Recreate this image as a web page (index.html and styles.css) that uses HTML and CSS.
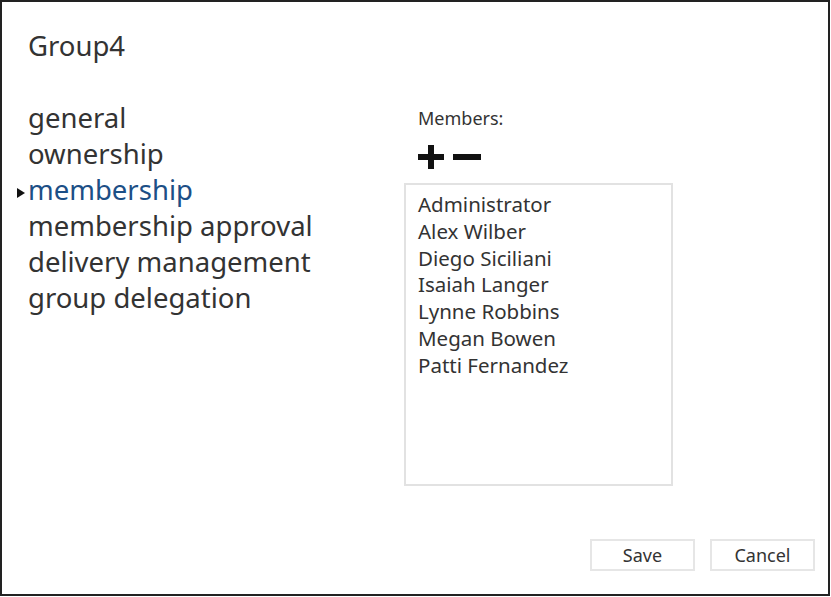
FILE: index.html
```html
<!DOCTYPE html>
<html lang="en">
<head>
    <meta charset="UTF-8">
    <title>Group4</title>
    <link rel="stylesheet" href="styles.css">
</head>
<body>
    <div class="dialog">
        <h1 class="title">Group4</h1>
        <div class="content">
            <nav class="sections">
                <a href="#">general</a>
                <a href="#">ownership</a>
                <a href="#" class="current">membership</a>
                <a href="#">membership approval</a>
                <a href="#">delivery management</a>
                <a href="#">group delegation</a>
            </nav>
            <div class="members">
                <div class="label">Members:</div>
                <div class="tools">
                    <svg width="26" height="24" viewBox="0 0 26 24">
                        <rect x="0" y="9" width="26" height="6" fill="#111"/>
                        <rect x="10" y="0" width="6" height="24" fill="#111"/>
                    </svg>
                    <svg width="28" height="24" viewBox="0 0 28 24">
                        <rect x="0" y="9" width="28" height="6" fill="#111"/>
                    </svg>
                </div>
                <ul class="list">
                    <li>Administrator</li>
                    <li>Alex Wilber</li>
                    <li>Diego Siciliani</li>
                    <li>Isaiah Langer</li>
                    <li>Lynne Robbins</li>
                    <li>Megan Bowen</li>
                    <li>Patti Fernandez</li>
                </ul>
            </div>
        </div>
        <div class="buttons">
            <button type="button">Save</button>
            <button type="button">Cancel</button>
        </div>
    </div>
</body>
</html>
```
FILE: styles.css
```css
body {
    margin: 0;
    padding: 0;
    background-color: white;
    font-family: "Noto Sans", "Open Sans", sans-serif;
    color: #333;
}
.dialog {
    width: 830px;
    height: 596px;
    box-sizing: border-box;
    border: 2px solid #222;
    display: flex;
    flex-direction: column;
}
.title {
    margin: 0;
    padding: 26px 0 0 26px;
    font-size: 27.5px;
    font-weight: normal;
    line-height: 36px;
}
.content {
    display: flex;
    margin-top: 36px;
}
.sections {
    width: 376px;
    display: flex;
    flex-direction: column;
    padding-left: 26px;
}
.sections a {
    font-size: 27.5px;
    line-height: 36px;
    color: #333;
    text-decoration: none;
    position: relative;
}
.sections a.current {
    color: #1c4f86;
}
.sections a.current::before {
    content: "";
    position: absolute;
    left: -11px;
    top: 16px;
    border-left: 8px solid #111;
    border-top: 5px solid transparent;
    border-bottom: 5px solid transparent;
}
.members {
    display: flex;
    flex-direction: column;
}
.label {
    font-size: 18px;
    line-height: 24px;
    padding-left: 14px;
    margin-top: 6px;
}
.tools {
    display: flex;
    gap: 9px;
    padding-left: 14px;
    margin-top: 15px;
}
.list {
    list-style: none;
    margin: 14px 0 0 0;
    padding: 6px 0 0 12px;
    width: 269px;
    height: 303px;
    box-sizing: border-box;
    border: 2px solid #e2e2e2;
}
.list li {
    font-size: 20.5px;
    line-height: 26.8px;
}
.buttons {
    margin-top: auto;
    display: flex;
    justify-content: flex-end;
    gap: 15px;
    padding: 0 13px 23px 0;
}
.buttons button {
    width: 105px;
    height: 32px;
    background-color: white;
    border: 2px solid #e6e6e6;
    font-family: "Noto Sans", "Open Sans", sans-serif;
    font-size: 18px;
    color: #333;
}
```
